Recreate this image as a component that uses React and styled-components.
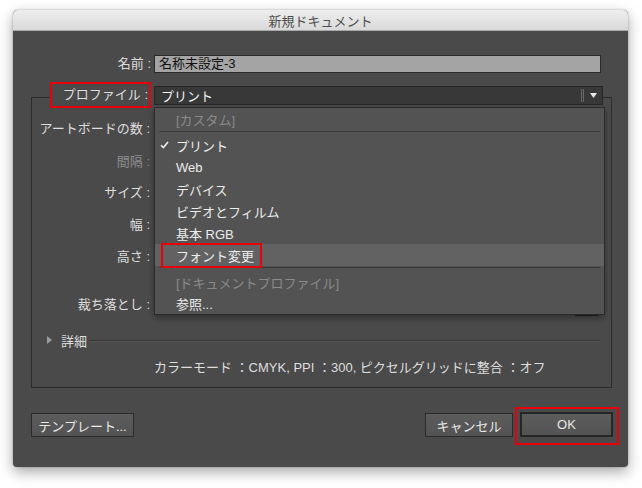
import styled, { createGlobalStyle } from "styled-components"

const GlobalStyle = createGlobalStyle`
    html, body {
        margin:0;
        padding:0;
        background:#ffffff;
    }
    body {
        font-family:"Liberation Sans", "Noto Sans CJK JP", sans-serif;
        font-size:13px;
    }
`

const Page = styled.div`
    width:642px;
    height:488px;
    overflow:hidden;
    padding:10px 0 0 13px;
    box-sizing:border-box;
`

const Window = styled.div`
    width:615px;
    height:457px;
    border-radius:5px 5px 4px 4px;
    background:#4a4a4a;
    box-shadow:0 5px 14px rgba(0,0,0,0.35), 0 0 2px rgba(0,0,0,0.3);
    overflow:hidden;
    display:flex;
    flex-direction:column;
`

const TitleBar = styled.div`
    height:21px;
    flex:none;
    background:linear-gradient(#eeeeee, #d9d9d9);
    border-bottom:1px solid #a9a9a9;
    box-sizing:border-box;
    display:flex;
    align-items:center;
    justify-content:center;
    color:#4e4e4e;
    font-size:13px;
`

const Body = styled.div`
    padding:0 16px 0 18px;
    display:flex;
    flex-direction:column;
`

const NameRow = styled.div`
    margin-top:24px;
    display:flex;
    align-items:center;
    height:18px;
`

const Label = styled.div`
    width:${props => props.$w || 120}px;
    flex:none;
    text-align:right;
    color:${props => props.$disabled ? "#8c8c8c" : "#dedede"};
    white-space:nowrap;
    line-height:18px;
`

const NameInput = styled.div`
    margin-left:3px;
    width:447px;
    height:18px;
    box-sizing:border-box;
    background:#a4a4a4;
    border:1px solid #2a2a2a;
    color:#111;
    padding-left:4px;
    line-height:16px;
`

const Group = styled.fieldset`
    margin:9px 0 0 0;
    padding:0 0 9px 0;
    width:581px;
    box-sizing:border-box;
    border:1px solid #2c2c2c;
    min-width:0;
`

const Legend = styled.legend`
    margin-left:18px;
    padding:0;
`

const LegendInner = styled.div`
    display:flex;
    align-items:flex-start;
    padding-bottom:4px;
`

const OutlinedLabel = styled.div`
    width:101px;
    height:26px;
    box-sizing:border-box;
    border:2px solid #e8000b;
    color:#dedede;
    text-align:right;
    line-height:22px;
    padding-right:1px;
    white-space:nowrap;
`

const Select = styled.div`
    position:relative;
    margin:4px 0 0 3px;
    width:449px;
    height:19px;
    box-sizing:border-box;
    background:#383838;
    border:1px solid #262626;
    color:#f2f2f2;
    display:flex;
    align-items:center;
    padding-left:6px;
`

const SelectText = styled.span`
    flex:1;
`

const Grip = styled.span`
    width:3px;
    height:13px;
    border-left:1px solid #6a6a6a;
    border-right:1px solid #6a6a6a;
    box-sizing:border-box;
    margin-right:6px;
`

const Arrow = styled.svg`
    width:7px;
    height:5px;
    margin-right:5px;
`

const Menu = styled.div`
    position:absolute;
    top:20px;
    left:-1px;
    width:451px;
    height:208px;
    box-sizing:border-box;
    background:#535353;
    border:1px solid #2a2a2a;
    box-shadow:0 3px 6px rgba(0,0,0,0.35);
    z-index:10;
`

const Item = styled.div`
    position:relative;
    height:${props => props.$h || 22}px;
    display:flex;
    align-items:center;
    padding-left:5px;
    background:${props => props.$active ? "#626262" : "transparent"};
    color:${props => props.$disabled ? "#8a8a8a" : "#ececec"};
    white-space:nowrap;
`

const CheckCol = styled.span`
    width:16px;
    flex:none;
    display:flex;
    align-items:center;
`

const Separator = styled.div`
    height:1px;
    margin:1px 4px ${props => props.$after || 2}px 4px;
    background:#3a3a3a;
`

const Mark = styled.div`
    position:absolute;
    left:6px;
    top:-1px;
    width:101px;
    height:25px;
    box-sizing:border-box;
    border:2px solid #e8000b;
`

const Row = styled.div`
    margin-top:${props => props.$top}px;
    height:22px;
    display:flex;
    align-items:center;
`

const Field = styled.div`
    margin-left:4px;
    width:447px;
    display:flex;
    justify-content:flex-end;
`

const LinkButton = styled.div`
    width:23px;
    height:22px;
    background:#222;
    margin-right:3px;
`

const DetailRow = styled.div`
    margin-top:14px;
    height:20px;
    display:flex;
    align-items:center;
    padding-left:15px;
    color:#dedede;
`

const Caret = styled.svg`
    width:5px;
    height:8px;
    margin-right:9px;
`

const Rule = styled.div`
    flex:1;
    height:1px;
    margin:0 11px 0 2px;
    background:#353535;
    box-shadow:0 1px 0 #555;
`

const Summary = styled.div`
    margin-top:8px;
    height:20px;
    line-height:20px;
    padding-left:122px;
    color:#dedede;
    white-space:nowrap;
`

const Footer = styled.div`
    margin:19px -7px 0 0;
    display:flex;
    align-items:flex-start;
`

const Button = styled.div`
    height:24px;
    box-sizing:border-box;
    padding:0 ${props => props.$pad || 8}px;
    width:${props => props.$w}px;
    background:linear-gradient(#5c5c5c, #535353);
    border:${props => props.$default ? "2px solid #262626" : "1px solid #2b2b2b"};
    color:#e8e8e8;
    display:flex;
    align-items:center;
    justify-content:center;
    margin-top:${props => props.$mt || 0}px;
    white-space:nowrap;
`

const Spacer = styled.div`
    flex:1;
`

const RedBox = styled.div`
    margin-left:2px;
    border:2px solid #e8000b;
    padding:3px 4px 6px 3px;
`

const menuItems = [
    { text: "プリント", checked: true },
    { text: "Web" },
    { text: "デバイス" },
    { text: "ビデオとフィルム" },
    { text: "基本 RGB" },
]

const App = () => {
    return (
        <Page>
            <GlobalStyle />
            <Window>
                <TitleBar>新規ドキュメント</TitleBar>
                <Body>
                    <NameRow>
                        <Label $w={120}>名前 :</Label>
                        <NameInput>名称未設定-3</NameInput>
                    </NameRow>

                    <Group>
                        <Legend>
                            <LegendInner>
                                <OutlinedLabel>プロファイル :</OutlinedLabel>
                                <Select>
                                    <SelectText>プリント</SelectText>
                                    <Grip />
                                    <Arrow viewBox="0 0 7 5">
                                        <polygon points="0,0 7,0 3.5,5" fill="#e6e6e6" />
                                    </Arrow>
                                    <Menu>
                                        <Item $disabled>
                                            <CheckCol />[カスタム]
                                        </Item>
                                        <Separator />
                                        {menuItems.map((item) => (
                                            <Item key={item.text}>
                                                <CheckCol>
                                                    {item.checked && (
                                                        <svg width="9" height="8" viewBox="0 0 9 8">
                                                            <path d="M1 4.2 L3.4 6.6 L8 1" stroke="#ececec" strokeWidth="1.6" fill="none" />
                                                        </svg>
                                                    )}
                                                </CheckCol>
                                                {item.text}
                                            </Item>
                                        ))}
                                        <Item $active>
                                            <CheckCol />フォント変更
                                            <Mark />
                                        </Item>
                                        <Separator $after={4} />
                                        <Item $disabled $h={21}>
                                            <CheckCol />[ドキュメントプロファイル]
                                        </Item>
                                        <Item $h={21}>
                                            <CheckCol />参照...
                                        </Item>
                                    </Menu>
                                </Select>
                            </LegendInner>
                        </Legend>

                        <Row $top={6}><Label $w={118}>アートボードの数 :</Label><Field /></Row>
                        <Row $top={11}><Label $w={118} $disabled>間隔 :</Label><Field /></Row>
                        <Row $top={9}><Label $w={118}>サイズ :</Label><Field /></Row>
                        <Row $top={10}><Label $w={118}>幅 :</Label><Field /></Row>
                        <Row $top={10}><Label $w={118}>高さ :</Label><Field /></Row>
                        <Row $top={26}>
                            <Label $w={118}>裁ち落とし :</Label>
                            <Field><LinkButton /></Field>
                        </Row>

                        <DetailRow>
                            <Caret viewBox="0 0 5 8">
                                <polygon points="0,0 5,4 0,8" fill="#9c9c9c" />
                            </Caret>
                            詳細
                            <Rule />
                        </DetailRow>
                        <Summary>カラーモード ：CMYK, PPI ：300, ピクセルグリッドに整合 ：オフ</Summary>
                    </Group>

                    <Footer>
                        <Button $w={103} $mt={6}>テンプレート...</Button>
                        <Spacer />
                        <Button $w={88} $mt={6}>キャンセル</Button>
                        <RedBox>
                            <Button $w={93} $default style={{ height: 25 }}>OK</Button>
                        </RedBox>
                    </Footer>
                </Body>
            </Window>
        </Page>
    )
}

export default App
